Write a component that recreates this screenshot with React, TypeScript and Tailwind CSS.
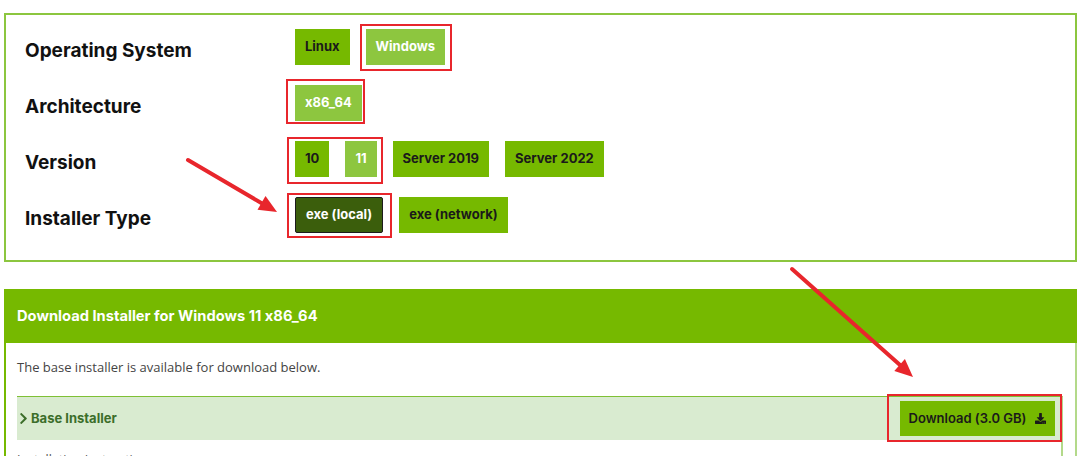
import React from 'react';
import { FaDownload, FaChevronRight } from 'react-icons/fa';

type Option = {
  label: string;
  state?: 'active' | 'pressed';
};

const optionBase = 'h-9 px-[10px] flex items-center text-[13px] font-bold whitespace-nowrap';

const OptionButton: React.FC<{ opt: Option }> = ({ opt }) => {
  if (opt.state === 'pressed') {
    return (
      <button className={`${optionBase} bg-[#3b5e0c] text-white border-[1.5px] border-[#1c1c1c] rounded-[2px]`}>
        {opt.label}
      </button>
    );
  }
  if (opt.state === 'active') {
    return <button className={`${optionBase} bg-[#8dc63f] text-white`}>{opt.label}</button>;
  }
  return <button className={`${optionBase} bg-[#76b900] text-[#1a1a1a]`}>{opt.label}</button>;
};

// red marker frame drawn over a highlighted control
const Mark: React.FC<{ className: string }> = ({ className }) => (
  <span className={`pointer-events-none absolute border-2 border-solid border-[#e8262c] bg-transparent ${className}`} />
);

const Label: React.FC<{ children: React.ReactNode }> = ({ children }) => (
  <div className="w-[270px] h-9 pt-2 flex items-center text-[19px] font-bold text-[#111]">{children}</div>
);

export default function App() {
  return (
    <div className="relative h-[456px] w-[1080px] overflow-hidden bg-white font-['Inter',sans-serif] text-[#1a1a1a] [font-feature-settings:'calt'_0]">
      <div className="pl-1 pr-[3px] pt-[13px]">
        {/* selector panel */}
        <section className="border-2 border-[#8cc63f] pl-[19px] pt-[14px] pb-[27px] flex flex-col gap-5">
          <div className="flex">
            <Label>Operating System</Label>
            <div className="flex gap-4">
              <OptionButton opt={{ label: 'Linux' }} />
              <div className="relative">
                <OptionButton opt={{ label: 'Windows', state: 'active' }} />
                <Mark className="-left-[6px] -right-[7px] -top-[5px] -bottom-[6px]" />
              </div>
            </div>
          </div>

          <div className="flex">
            <Label>Architecture</Label>
            <div className="relative">
              <OptionButton opt={{ label: 'x86_64', state: 'active' }} />
              <Mark className="-left-[9px] -right-[3px] -top-[6px] -bottom-[3px]" />
            </div>
          </div>

          <div className="flex">
            <Label>Version</Label>
            <div className="flex gap-4">
              <div className="relative flex gap-4">
                <OptionButton opt={{ label: '10' }} />
                <OptionButton opt={{ label: '11', state: 'active' }} />
                <Mark className="-left-[8px] -right-[6px] -top-[4px] -bottom-[7px]" />
              </div>
              <OptionButton opt={{ label: 'Server 2019' }} />
              <OptionButton opt={{ label: 'Server 2022' }} />
            </div>
          </div>

          <div className="flex">
            <Label>Installer Type</Label>
            <div className="flex gap-4">
              <div className="relative">
                <OptionButton opt={{ label: 'exe (local)', state: 'pressed' }} />
                <Mark className="-left-[8px] -right-[9px] -top-[4px] -bottom-[5px]" />
              </div>
              <OptionButton opt={{ label: 'exe (network)' }} />
            </div>
          </div>
        </section>

        {/* download panel */}
        <section className="mt-[27px]">
          <div className="h-[54px] bg-[#76b900] px-[13px] flex items-center text-white font-bold text-[14.7px]">
            Download Installer for Windows 11 x86_64
          </div>
          <div className="border-l-2 border-l-[#76b900] border-r-2 border-r-[#b3d98a] pl-[11px] pr-[12px] pt-[14px]">
            <p className="font-['Open_Sans',sans-serif] text-[13px] leading-5 text-[#444]">
              The base installer is available for download below.
            </p>
            <div className="mt-[19px] border-t border-t-[#7fc035] border-r-2 border-r-[#b3d98a]">
              <div className="h-[43px] bg-[#d9ebd0] flex items-center justify-between pr-[6px]">
                <div className="flex items-center gap-[1px] text-[13px] font-bold text-[#3c6e2a]">
                  <FaChevronRight size={13} />
                  Base Installer
                </div>
                <div className="relative">
                  <button className="h-[35px] w-[155px] bg-[#76b900] flex items-center justify-center gap-[9px] text-[13px] font-semibold text-[#1a1a1a]">
                    Download (3.0 GB)
                    <FaDownload size={11} />
                  </button>
                  <Mark className="-left-[13px] -right-[7px] -top-[7px] -bottom-[6px]" />
                </div>
              </div>
              <p className="pt-[10px] font-['Open_Sans',sans-serif] text-[12.5px] leading-5 text-[#555]">
                Installation Instructions:
              </p>
            </div>
          </div>
        </section>
      </div>

      {/* callout arrows */}
      <svg className="pointer-events-none absolute inset-0" width="1080" height="456" viewBox="0 0 1080 456">
        <g stroke="#e8262c" strokeWidth="4" strokeLinecap="round" fill="#e8262c">
          <line x1="188" y1="160" x2="263" y2="204" />
          <polygon points="277,212 257.5,209.8 265.5,196" stroke="none" />
          <line x1="792" y1="269" x2="900" y2="365" />
          <polygon points="913,377 894.3,371 904.9,359" stroke="none" />
        </g>
      </svg>
    </div>
  );
}
